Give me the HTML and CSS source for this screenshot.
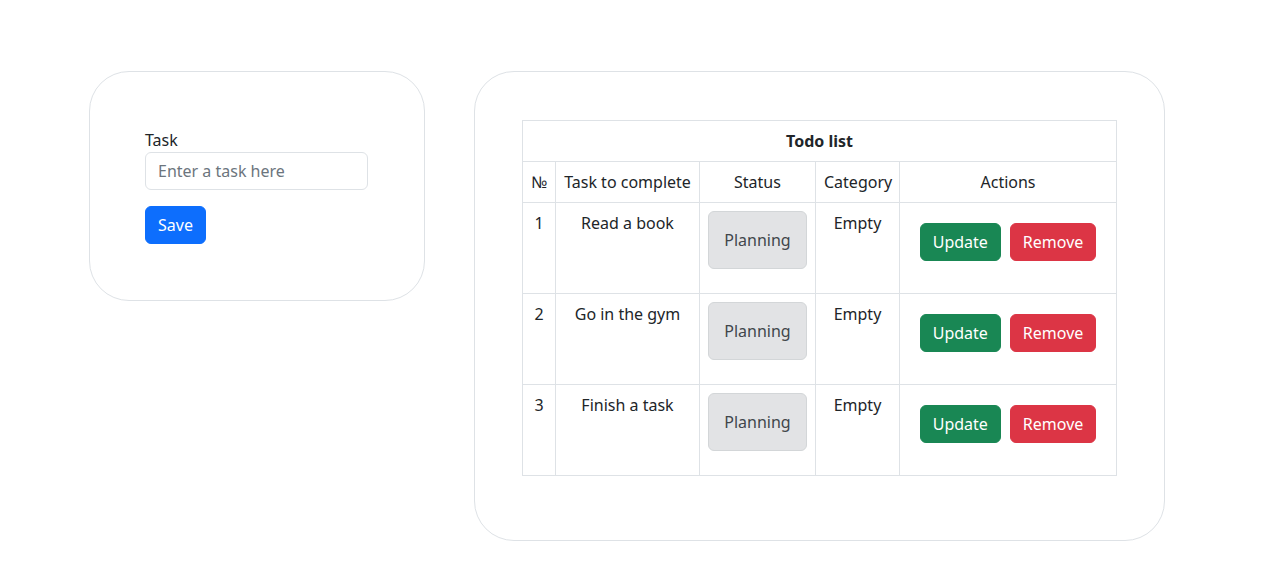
FILE: index.html
```html
<!DOCTYPE html>
<html lang="en">
<head>
<meta charset="utf-8">
<title>Todo</title>
<link rel="stylesheet" href="styles.css">
</head>
<body>
<main class="page">
  <section class="card card-form">
    <label class="form-label" for="task">Task</label>
    <input class="form-control" id="task" type="text" placeholder="Enter a task here">
    <button class="btn btn-primary save">Save</button>
  </section>
  <section class="card card-table">
    <table class="table">
      <colgroup>
        <col class="col-num"><col class="col-task"><col class="col-status"><col class="col-cat"><col class="col-actions">
      </colgroup>
      <thead>
        <tr><th colspan="5" class="title">Todo list</th></tr>
        <tr><th>№</th><th>Task to complete</th><th>Status</th><th>Category</th><th>Actions</th></tr>
      </thead>
      <tbody>
        <tr>
          <td>1</td><td>Read a book</td>
          <td><div class="status">Planning</div></td>
          <td>Empty</td>
          <td><div class="actions"><button class="btn btn-success">Update</button><button class="btn btn-danger">Remove</button></div></td>
        </tr>
        <tr>
          <td>2</td><td>Go in the gym</td>
          <td><div class="status">Planning</div></td>
          <td>Empty</td>
          <td><div class="actions"><button class="btn btn-success">Update</button><button class="btn btn-danger">Remove</button></div></td>
        </tr>
        <tr>
          <td>3</td><td>Finish a task</td>
          <td><div class="status">Planning</div></td>
          <td>Empty</td>
          <td><div class="actions"><button class="btn btn-success">Update</button><button class="btn btn-danger">Remove</button></div></td>
        </tr>
      </tbody>
    </table>
  </section>
</main>
</body>
</html>
```

FILE: styles.css
```css
* { box-sizing: border-box; }
html, body {
  margin: 0;
  background: #fff;
  color: #212529;
  font-family: "Noto Sans", "Open Sans", sans-serif;
  font-size: 16px;
  line-height: 24px;
}
.page {
  display: flex;
  align-items: flex-start;
  gap: 49px;
  padding: 71px 0 0 89px;
}
.card {
  border: 1px solid #dee2e6;
  border-radius: 40px;
  background: #fff;
}
.card-form {
  width: 336px;
  padding: 56px 56px 56px 55px;
  display: flex;
  flex-direction: column;
  align-items: flex-start;
}
.form-label {
  display: block;
  margin-bottom: 0;
}
.form-control {
  display: block;
  width: 100%;
  height: 38px;
  padding: 6px 12px;
  font: inherit;
  color: #212529;
  border: 1px solid #dee2e6;
  border-radius: 6px;
  outline: none;
}
.form-control::placeholder { color: #6c757d; }
.btn {
  font: inherit;
  height: 38px;
  padding: 6px 12px;
  border: 1px solid transparent;
  border-radius: 6px;
  color: #fff;
  cursor: pointer;
}
.save { margin-top: 16px; }
.btn-primary { background: #0d6efd; border-color: #0d6efd; }
.btn-success { background: #198754; border-color: #198754; }
.btn-danger { background: #dc3545; border-color: #dc3545; }
.card-table {
  width: 691px;
  padding: 48px 48px 48px 47px;
}
.table {
  width: 594px;
  border-collapse: collapse;
  table-layout: fixed;
  margin-bottom: 16px;
  vertical-align: top;
}
.col-num { width: 33px; }
.col-task { width: 144px; }
.col-status { width: 116px; }
.col-cat { width: 84px; }
.col-actions { width: 217px; }
.table th, .table td {
  border: 1px solid #dee2e6;
  padding: 8px;
  text-align: center;
  vertical-align: top;
  font-weight: 400;
}
.table th.title { font-weight: 700; }
.status {
  display: block;
  width: 100%;
  height: 58px;
  line-height: 56px;
  margin-bottom: 16px;
  background: #e2e3e5;
  border: 1px solid #d3d6d8;
  border-radius: 6px;
  color: #41464b;
}
.actions {
  display: flex;
  justify-content: center;
  gap: 9px;
  margin-top: 12px;
}
```
